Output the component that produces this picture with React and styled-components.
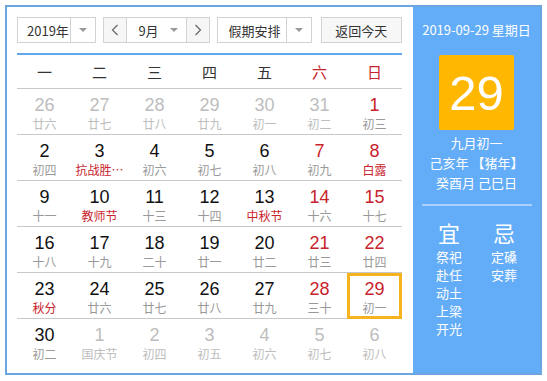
import React from "react";
import styled, { createGlobalStyle } from "styled-components";

const GlobalStyle = createGlobalStyle`
  body {
    margin: 0;
    background: #fff;
    font-family: "Liberation Sans", "Noto Sans CJK SC", sans-serif;
  }
`;

const red = "#c8232c";
const cjk = `"Noto Sans CJK SC", "Liberation Sans", sans-serif`;

const Wrapper = styled.div`
  margin: 5px 0 0 5px;
  width: 537px;
  height: 370px;
  box-sizing: border-box;
  border: 2px solid #6ba6e0;
  display: flex;
`;

const Main = styled.div`
  width: 406px;
  padding: 10px 11px 0 10px;
  box-sizing: border-box;
`;

const Toolbar = styled.div`
  display: flex;
  height: 26px;
  gap: 7px;
  padding-bottom: 10px;
  border-bottom: 2px solid #64a8ec;
`;

const Select = styled.div`
  display: flex;
  width: ${(p) => p.width}px;
  height: 26px;
  box-sizing: border-box;
  border: 1px solid #d2d2d2;
  background: #fff;
  font-family: ${cjk};
  font-size: 13px;
  color: #333;
`;

const SelectText = styled.div`
  flex: 1;
  display: flex;
  align-items: center;
  white-space: nowrap;
  padding-left: ${(p) => p.pad || 10}px;
`;

const Arrow = styled.div`
  width: ${(p) => p.width || 23}px;
  flex-shrink: 0;
  display: flex;
  align-items: center;
  justify-content: center;
  border-left: ${(p) => (p.plain ? "none" : "1px solid #d2d2d2")};
  &::after {
    content: "";
    border-left: 4px solid transparent;
    border-right: 4px solid transparent;
    border-top: 4px solid #999;
  }
`;

const Group = styled.div`
  display: flex;
  height: 26px;
  box-sizing: border-box;
  border: 1px solid #d2d2d2;
`;

const Step = styled.div`
  width: 22px;
  display: flex;
  align-items: center;
  justify-content: center;
  background: #f6f6f6;
  border-left: ${(p) => (p.side === "right" ? "1px solid #d2d2d2" : "none")};
  border-right: ${(p) => (p.side === "left" ? "1px solid #d2d2d2" : "none")};
`;

const MonthBox = styled.div`
  width: 59px;
  display: flex;
  font-family: ${cjk};
  font-size: 13px;
  color: #333;
`;

const TodayButton = styled.div`
  margin-left: 2px;
  width: 82px;
  height: 26px;
  box-sizing: border-box;
  border: 1px solid #d2d2d2;
  background: #f7f7f7;
  display: flex;
  align-items: center;
  justify-content: center;
  font-family: ${cjk};
  font-size: 13px;
  color: #333;
`;

const Grid = styled.div`
  display: grid;
  grid-template-columns: repeat(7, 55px);
`;

const WeekHead = styled.div`
  height: 33px;
  display: flex;
  align-items: center;
  justify-content: center;
  font-family: ${cjk};
  font-size: 15px;
  color: ${(p) => (p.weekend ? red : "#333")};
  border-bottom: 1px solid #c8c8c8;
`;

const Cell = styled.div`
  height: 46px;
  box-sizing: border-box;
  border-bottom: ${(p) => (p.last ? "none" : "1px solid #c8c8c8")};
  display: flex;
  flex-direction: column;
  align-items: center;
  padding-top: 5px;
  ${(p) =>
    p.today &&
    `
    outline: 3px solid #f5b41f;
    outline-offset: -3px;
    `}
`;

const DayNum = styled.div`
  font-family: "Liberation Sans", sans-serif;
  font-size: 18px;
  line-height: 22px;
  color: ${(p) => (p.other ? "#bdbdbd" : p.red ? red : "#111")};
`;

const Lunar = styled.div`
  font-family: ${cjk};
  font-size: 12px;
  line-height: 16px;
  color: ${(p) => (p.other ? "#bdbdbd" : p.red ? red : "#999")};
  white-space: nowrap;
`;

const Side = styled.div`
  flex: 1;
  background: #63acf7;
  display: flex;
  flex-direction: column;
  align-items: center;
  color: #fff;
  font-family: ${cjk};
`;

const DateLine = styled.div`
  margin-top: 14px;
  font-size: 13px;
  line-height: 18px;
`;

const BigDay = styled.div`
  margin-top: 16px;
  width: 75px;
  height: 75px;
  background: #ffb700;
  border-radius: 2px;
  display: flex;
  align-items: center;
  justify-content: center;
  font-family: "Liberation Sans", sans-serif;
  font-size: 49px;
  color: #fff;
`;

const Info = styled.div`
  margin-top: 3px;
  font-size: 13px;
  line-height: 20px;
  text-align: center;
`;

const Divider = styled.div`
  margin-top: 11px;
  width: 110px;
  height: 2px;
  background: rgba(255, 255, 255, 0.45);
`;

const Advice = styled.div`
  margin-top: 11px;
  display: flex;
`;

const AdviceCol = styled.div`
  width: 55px;
  display: flex;
  flex-direction: column;
  align-items: center;
  font-size: 13px;
  line-height: 18px;
`;

const AdviceHead = styled.div`
  font-size: 22px;
  line-height: 30px;
  margin-bottom: 1px;
`;

const ChevronLeft = () => (
  <svg width="8" height="12" viewBox="0 0 8 12">
    <path d="M6.5 1 L1.5 6 L6.5 11" fill="none" stroke="#666" strokeWidth="1.2" />
  </svg>
);

const ChevronRight = () => (
  <svg width="8" height="12" viewBox="0 0 8 12">
    <path d="M1.5 1 L6.5 6 L1.5 11" fill="none" stroke="#666" strokeWidth="1.2" />
  </svg>
);

const weekdays = ["一", "二", "三", "四", "五", "六", "日"];

// [day, lunar, flags]  o = other month, r = red number, h = red lunar, t = today
const days = [
  [26, "廿六", "o"], [27, "廿七", "o"], [28, "廿八", "o"], [29, "廿九", "o"], [30, "初一", "o"], [31, "初二", "o"], [1, "初三", "r"],
  [2, "初四", ""], [3, "抗战胜…", "h"], [4, "初六", ""], [5, "初七", ""], [6, "初八", ""], [7, "初九", "r"], [8, "白露", "rh"],
  [9, "十一", ""], [10, "教师节", "h"], [11, "十三", ""], [12, "十四", ""], [13, "中秋节", "h"], [14, "十六", "r"], [15, "十七", "r"],
  [16, "十八", ""], [17, "十九", ""], [18, "二十", ""], [19, "廿一", ""], [20, "廿二", ""], [21, "廿三", "r"], [22, "廿四", "r"],
  [23, "秋分", "h"], [24, "廿六", ""], [25, "廿七", ""], [26, "廿八", ""], [27, "廿九", ""], [28, "三十", "r"], [29, "初一", "rt"],
  [30, "初二", ""], [1, "国庆节", "o"], [2, "初四", "o"], [3, "初五", "o"], [4, "初六", "o"], [5, "初七", "o"], [6, "初八", "o"],
];

export default function App() {
  return (
    <>
      <GlobalStyle />
      <Wrapper>
        <Main>
          <Toolbar>
            <Select width={80}>
              <SelectText pad={9}>2019年</SelectText>
              <Arrow width={24} />
            </Select>
            <Group>
              <Step side="left">
                <ChevronLeft />
              </Step>
              <MonthBox>
                <SelectText pad={11}>9月</SelectText>
                <Arrow width={24} plain />
              </MonthBox>
              <Step side="right">
                <ChevronRight />
              </Step>
            </Group>
            <Select width={95}>
              <SelectText pad={10}>假期安排</SelectText>
              <Arrow width={24} />
            </Select>
            <TodayButton>返回今天</TodayButton>
          </Toolbar>
          <Grid>
            {weekdays.map((w, i) => (
              <WeekHead key={w} weekend={i >= 5}>
                {w}
              </WeekHead>
            ))}
            {days.map(([d, l, f], i) => (
              <Cell key={i} last={i >= 35} today={f.includes("t")}>
                <DayNum other={f.includes("o")} red={f.includes("r")}>
                  {d}
                </DayNum>
                <Lunar other={f.includes("o")} red={f.includes("h")}>
                  {l}
                </Lunar>
              </Cell>
            ))}
          </Grid>
        </Main>
        <Side>
          <DateLine>2019-09-29 星期日</DateLine>
          <BigDay>29</BigDay>
          <Info>
            九月初一
            <br />
            己亥年 【猪年】
            <br />
            癸酉月 己巳日
          </Info>
          <Divider />
          <Advice>
            <AdviceCol>
              <AdviceHead>宜</AdviceHead>
              <div>祭祀</div>
              <div>赴任</div>
              <div>动土</div>
              <div>上梁</div>
              <div>开光</div>
            </AdviceCol>
            <AdviceCol>
              <AdviceHead>忌</AdviceHead>
              <div>定磉</div>
              <div>安葬</div>
            </AdviceCol>
          </Advice>
        </Side>
      </Wrapper>
    </>
  );
}
